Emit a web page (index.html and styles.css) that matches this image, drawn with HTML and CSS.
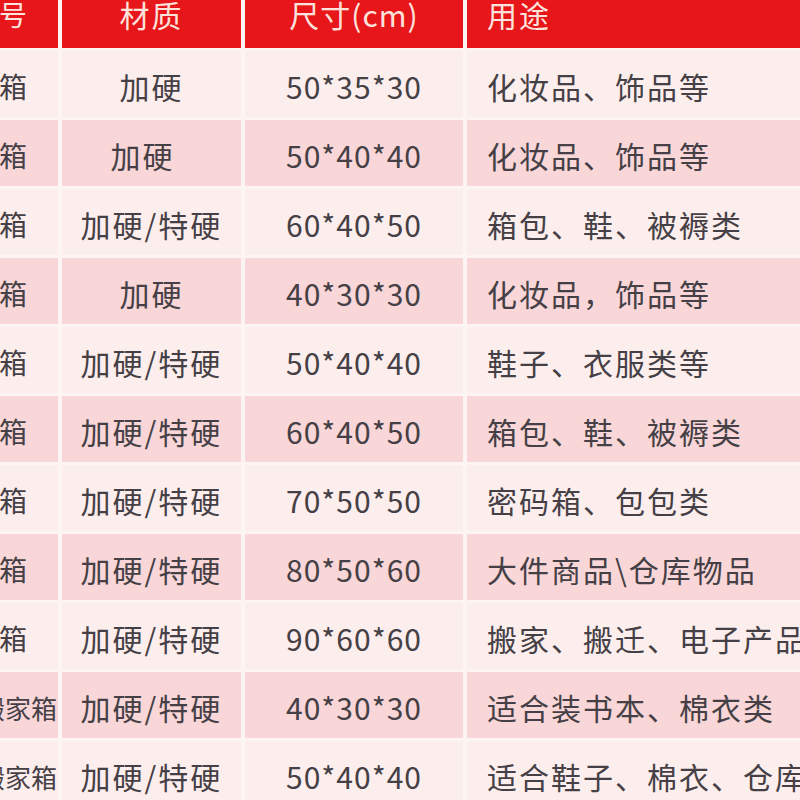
FILE: index.html
```html
<!DOCTYPE html>
<html lang="zh-CN">
<head>
<meta charset="utf-8">
<link rel="stylesheet" href="styles.css">
</head>
<body>
<div class="table">
  <div class="cell head first">纸箱型号</div>
  <div class="cell head center">材质</div>
  <div class="cell head center num">尺寸(cm)</div>
  <div class="cell head left">用途</div>

  <div class="cell odd first">一号纸箱</div>
  <div class="cell odd center">加硬</div>
  <div class="cell odd center num">50*35*30</div>
  <div class="cell odd left">化妆品、饰品等</div>

  <div class="cell even first">二号纸箱</div>
  <div class="cell even center shift">加硬</div>
  <div class="cell even center num">50*40*40</div>
  <div class="cell even left">化妆品、饰品等</div>

  <div class="cell odd first">三号纸箱</div>
  <div class="cell odd center">加硬/特硬</div>
  <div class="cell odd center num">60*40*50</div>
  <div class="cell odd left">箱包、鞋、被褥类</div>

  <div class="cell even first">四号纸箱</div>
  <div class="cell even center">加硬</div>
  <div class="cell even center num">40*30*30</div>
  <div class="cell even left">化妆品，饰品等</div>

  <div class="cell odd first">五号纸箱</div>
  <div class="cell odd center">加硬/特硬</div>
  <div class="cell odd center num">50*40*40</div>
  <div class="cell odd left">鞋子、衣服类等</div>

  <div class="cell even first">六号纸箱</div>
  <div class="cell even center">加硬/特硬</div>
  <div class="cell even center num">60*40*50</div>
  <div class="cell even left">箱包、鞋、被褥类</div>

  <div class="cell odd first">七号纸箱</div>
  <div class="cell odd center">加硬/特硬</div>
  <div class="cell odd center num">70*50*50</div>
  <div class="cell odd left">密码箱、包包类</div>

  <div class="cell even first">八号纸箱</div>
  <div class="cell even center">加硬/特硬</div>
  <div class="cell even center num">80*50*60</div>
  <div class="cell even left">大件商品\仓库物品</div>

  <div class="cell odd first">九号纸箱</div>
  <div class="cell odd center">加硬/特硬</div>
  <div class="cell odd center num">90*60*60</div>
  <div class="cell odd left">搬家、搬迁、电子产品类</div>

  <div class="cell even long">特小号搬家箱</div>
  <div class="cell even center">加硬/特硬</div>
  <div class="cell even center num">40*30*30</div>
  <div class="cell even left">适合装书本、棉衣类</div>

  <div class="cell odd long">特大号搬家箱</div>
  <div class="cell odd center">加硬/特硬</div>
  <div class="cell odd center num">50*40*40</div>
  <div class="cell odd left">适合鞋子、棉衣、仓库物品</div>
</div>
</body>
</html>
```

FILE: styles.css
```css
html, body {
  margin: 0;
  padding: 0;
  background: #fdf4f4;
  overflow: hidden;
  width: 800px;
  height: 800px;
}

.table {
  display: grid;
  grid-template-columns: 180px 179px 218px 420px;
  grid-template-rows: 68px repeat(11, 66px);
  column-gap: 4px;
  row-gap: 3px;
  margin-top: -20px;
  margin-left: -122px;
  font-family: "Noto Sans CJK SC", "Noto Sans", sans-serif;
  font-size: 30px;
  letter-spacing: 2px;
  color: #454045;
}

.cell {
  display: flex;
  align-items: center;
  justify-content: center;
  white-space: nowrap;
  overflow: hidden;
  padding-top: 4px;
  box-sizing: border-box;
}

.first {
  font-size: 28px;
  letter-spacing: 0;
  padding-left: 6px;
}

.long {
  font-size: 26px;
  letter-spacing: 0;
  padding-left: 22px;
}

.center {
  justify-content: center;
}

.num {
  letter-spacing: 1px;
}

.left {
  justify-content: flex-start;
  padding-left: 20px;
}

.shift {
  padding-right: 18px;
}

.head {
  background: #e6161b;
  color: #fde2dc;
  padding-top: 0;
}

.odd {
  background: #fdeeee;
}

.even {
  background: #f9d6d8;
}
```
